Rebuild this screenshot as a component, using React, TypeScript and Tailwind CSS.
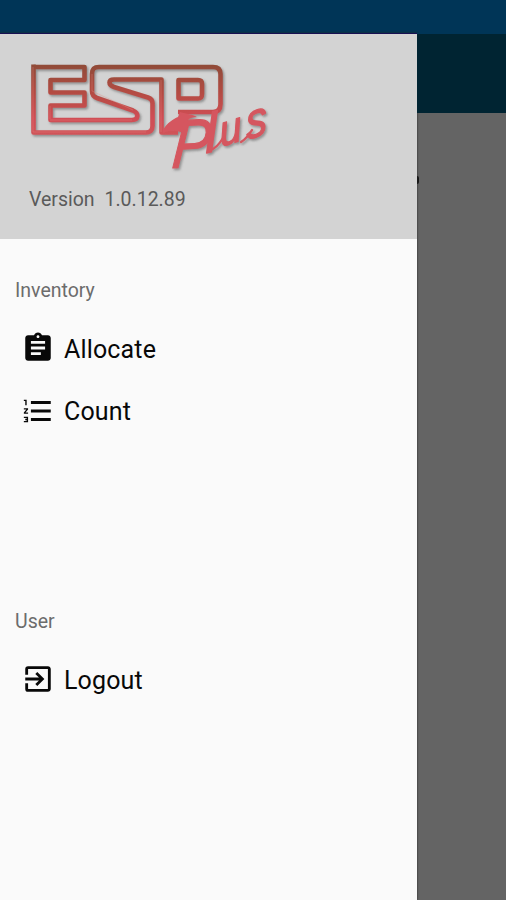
import type { ReactNode } from "react";
import { MdAssignment, MdExitToApp, MdFormatListNumbered } from "react-icons/md";

const APP_VERSION = "1.0.12.89";

type Item = { label: string; icon: ReactNode };

const INVENTORY: Item[] = [
  { label: "Allocate", icon: <MdAssignment size={34} /> },
  { label: "Count", icon: <MdFormatListNumbered size={34} /> },
];

const USER: Item[] = [{ label: "Logout", icon: <MdExitToApp size={34} /> }];

function Logo() {
  return (
    <svg
      width="280"
      height="145"
      viewBox="20 55 280 145"
      fill="none"
      role="img"
      aria-label="ESP Plus"
      className="block overflow-visible"
    >
      <defs>
        <linearGradient id="ribbon" gradientUnits="userSpaceOnUse" x1="0" y1="64" x2="0" y2="136">
          <stop offset="0" stopColor="#8f4c38" />
          <stop offset="0.4" stopColor="#b44c43" />
          <stop offset="0.75" stopColor="#d04e55" />
          <stop offset="1" stopColor="#d0545a" />
        </linearGradient>
        <filter id="drop" x="-10%" y="-10%" width="120%" height="130%">
          <feDropShadow dx="1.5" dy="1.8" stdDeviation="1" floodColor="#555" floodOpacity="0.55" />
        </filter>
      </defs>
      <g filter="url(#drop)">
        {/* ribbon */}
        <g stroke="url(#ribbon)" strokeWidth="4.6" strokeLinejoin="round">
          <path d="M33.5 67H84.5V80H50.5V92.5H84.5V105.5H50.5V120H132C139 120 139 113 133 110.5L97 98C93 96.5 92 95 92 91V74C92 69 94 67 99 67H213C218 67 220.5 69 220.5 74V104C220.5 109 218 112 213 112H178" />
          <path d="M33.5 64.5V132.5H146C150 132.5 152.5 130 152.5 126V103C152.5 100 151 98.5 148 97.5L114 87C108 85 108 79.5 114 79.5H161.5V132.5H178" />
          <path d="M178.5 80H198C201 80 202 81 202 84V94C202 97 201 98.5 198 98.5H178.5Z" />
        </g>
        <g stroke="#e58b83" strokeOpacity="0.35" strokeWidth="1">
          <path d="M33 67V132H146M50 120H132M50 106V119M161 80V132M92 74V91L133 110" />
        </g>
        {/* flag behind the script */}
        <path
          d="M163 130C167 123 173 119 178 117L180 112C187 114 192 114 197 117C189 117 186 121 184 127L183 133C176 130 169 130 163 133Z"
          fill="#d5575f"
        />
        <g
          fill="#d5575f"
          stroke="#d5575f"
          strokeWidth="1.2"
          strokeLinejoin="round"
          fontFamily="'Liberation Sans', sans-serif"
          fontStyle="italic"
        >
          <text transform="translate(171 168) rotate(-3) skewX(-8)" fontSize="68" textLength="38" lengthAdjust="spacingAndGlyphs">P</text>
          <text transform="translate(206 153) rotate(-14) skewX(-12)" fontSize="53" strokeWidth="1.8">l</text>
          <text transform="translate(221 147) rotate(-18) skewX(-12)" fontSize="42" textLength="23" lengthAdjust="spacingAndGlyphs">u</text>
          <text transform="translate(247 140) rotate(-18) skewX(-14)" fontSize="48" textLength="22" lengthAdjust="spacingAndGlyphs">s</text>
        </g>
        {/* joins between the script letters */}
        <path
          d="M210 150C215 149 220 143 223 138M241 142C246 139 249 135 252 130"
          stroke="#d5575f"
          strokeWidth="2.4"
          strokeLinecap="round"
        />
      </g>
    </svg>
  );
}

function MenuGroup({ title, items }: { title: string; items: Item[] }) {
  return (
    <section>
      <h2 className="pl-[15px] text-[19.5px] leading-6 text-[#6c6c6c]">{title}</h2>
      <ul className="mt-3.5">
        {items.map((item) => (
          <li key={item.label} className="flex h-[62.5px] items-center pl-[21px] text-[#080808]">
            {item.icon}
            <span className="ml-[9px] pt-[3px] text-[25px] leading-8 tracking-[0.15px]">{item.label}</span>
          </li>
        ))}
      </ul>
    </section>
  );
}

export default function App() {
  return (
    <div className="flex h-[900px] w-[506px] flex-col overflow-hidden bg-[#646464] font-['Roboto',sans-serif]">
      <div className="h-[33px] shrink-0 bg-[#003557]" />

      <div className="flex min-h-0 flex-1">
        <aside className="w-[417px] shrink-0 bg-[#fafafa] shadow-[0_0_2px_#222]">
          <header className="h-[206px] border-t border-[#171052] bg-[#d3d3d3] pl-5 pt-[21px]">
            <Logo />
            <p className="-mt-6 pl-[9px] text-[19.5px] leading-[48px] text-[#5a5a5a] [word-spacing:5px]">
              Version {APP_VERSION}
            </p>
          </header>

          <nav className="pt-10">
            <MenuGroup title="Inventory" items={INVENTORY} />
            <div className="h-42" />
            <MenuGroup title="User" items={USER} />
          </nav>
        </aside>

        {/* dimmed page behind the drawer */}
        <main className="flex-1">
          <div className="h-20 border-t border-[#003557] bg-[#002432]" />
          <div className="mt-[63px] h-2 w-0.5 rounded-r-full bg-[#181818]" />
        </main>
      </div>
    </div>
  );
}
